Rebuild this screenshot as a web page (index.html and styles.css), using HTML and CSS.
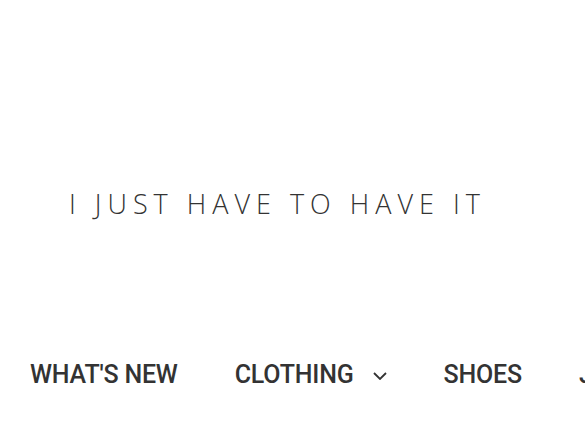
FILE: index.html
```html
<!DOCTYPE html>
<html>
<head>
<meta charset="utf-8">
<link rel="stylesheet" href="styles.css">
</head>
<body>
<header class="site-header">
  <div class="brand">I JUST HAVE TO HAVE IT</div>
  <nav class="nav">
    <a class="nav-item">WHAT'S NEW</a>
    <a class="nav-item">CLOTHING <svg class="chev" width="14" height="8" viewBox="0 0 14 8"><path d="M1 1 L7 7 L13 1" fill="none" stroke="#333" stroke-width="1.8"/></svg></a>
    <a class="nav-item">SHOES</a>
    <a class="nav-item">JEWELRY</a>
  </nav>
</header>
</body>
</html>
```
FILE: styles.css
```css
html, body {
  margin: 0;
  padding: 0;
  background: #fff;
  overflow: hidden;
}
.site-header {
  width: 585px;
  height: 438px;
  display: flex;
  flex-direction: column;
  overflow: hidden;
}
.brand {
  margin-top: 186px;
  padding-left: 69px;
  font-family: "Open Sans", sans-serif;
  font-weight: 300;
  font-size: 27px;
  line-height: 36px;
  letter-spacing: 6px;
  color: #333;
  white-space: nowrap;
}
.nav {
  margin-top: 138px;
  padding-left: 30px;
  display: flex;
  gap: 57px;
  white-space: nowrap;
}
.nav-item {
  font-family: Roboto, sans-serif;
  font-weight: 500;
  font-size: 25px;
  line-height: 30px;
  letter-spacing: -0.2px;
  color: #333;
  display: flex;
  align-items: center;
  flex-shrink: 0;
}
.chev {
  margin-left: 19px;
  margin-top: 2px;
}
```
